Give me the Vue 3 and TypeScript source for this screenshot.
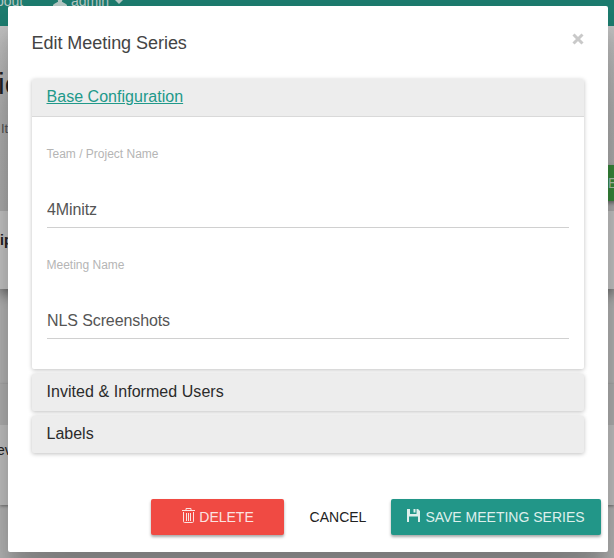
<script setup lang="ts">
import { ref } from 'vue'

const team = ref('4Minitz')
const meeting = ref('NLS Screenshots')
const collapsed = [
  { title: 'Invited & Informed Users', cls: 't-users' },
  { title: 'Labels', cls: 't-labels' },
]
</script>

<template>
  <div class="screen">
    <div class="page">
      <nav class="navbar">
        <span class="nav-about">bout</span>
        <svg class="nav-user" viewBox="0 0 14 14"><path d="M7 0c2.200 0 3.500 1.600 3.500 3.600 0 1.800-.8 3.200-1.500 4v1.200l4 2.200c.8.500 1 1 1 2H0c0-1 .2-1.500 1-2l4-2.200V7.600c-.7-.8-1.500-2.200-1.500-4C3.500 1.600 4.800 0 7 0z" /></svg>
        <span class="nav-name">admin</span>
        <svg class="caret" viewBox="0 0 8 4"><path d="M0 0h8L4 4z" /></svg>
      </nav>
      <section class="hero">
        <h1>ie</h1>
        <p>It</p>
        <span class="add">E</span>
      </section>
      <section class="list-card"><b>ip</b></section>
      <section class="table-card">
        <div class="table-head"></div>
        <div class="table-row">ev</div>
      </section>
    </div>

    <div class="modal">
      <header class="modal-header">
        <h4>Edit Meeting Series</h4>
        <button class="close" aria-label="Close">
          <svg viewBox="0 0 12 12"><path d="M1.500 1.500 10.500 10.500M10.500 1.500 1.500 10.500" /></svg>
        </button>
      </header>
      <div class="accordion">
        <section class="panel open">
          <div class="panel-heading"><a class="t-base">Base Configuration</a></div>
          <div class="panel-body">
            <label class="field-label">Team / Project Name</label>
            <input v-model="team" class="i-team" type="text" />
            <label class="field-label">Meeting Name</label>
            <input v-model="meeting" class="i-meet" type="text" />
          </div>
        </section>
        <section v-for="p in collapsed" :key="p.title" class="panel">
          <div class="panel-heading"><span :class="p.cls">{{ p.title }}</span></div>
        </section>
      </div>
      <footer class="modal-footer">
        <button class="btn danger">
          <svg class="trash" viewBox="0 0 13 15"><path d="M0 2.500h13M4 2.500V.5h5v2M1.500 4v9.300c0 .8.300 1.200 1 1.200h8c.7 0 1-.4 1-1.200V4M4.500 5v8M6.500 5v8M8.500 5v8" /></svg>
          <span>DELETE</span>
        </button>
        <button class="btn flat"><span>CANCEL</span></button>
        <button class="btn primary">
          <svg class="save" viewBox="0 0 13 13"><path d="M0 0h3v5h6.500V0H11l2 2v11h-2V7.500H2V13H0zM6.500 0h2v3.500h-2z" /></svg>
          <span>SAVE MEETING SERIES</span>
        </button>
      </footer>
    </div>
  </div>
</template>

<style>
body { margin: 0; overflow: hidden; }
</style>

<style scoped>
* { box-sizing: border-box; }
.screen { position: relative; width: 614px; height: 558px; overflow: hidden; background: #bdbdbd; font-family: "Liberation Sans", Arial, sans-serif; color: #222; }
h1, h4, p { margin: 0; font-weight: 400; }
.page { display: flex; flex-direction: column; height: 558px; }
.navbar { display: flex; align-items: flex-start; height: 26px; flex: none; background: #1d7d70; color: #b7c9c5; font-size: 14px; line-height: 16px; overflow: hidden; }
.nav-about { margin: -7px 0 0 -4px; width: 57px; }
.nav-user { width: 14px; height: 14px; margin-top: -7px; fill: currentColor; }
.nav-name { margin: -7px 0 0 4px; }
.caret { width: 8px; height: 4px; margin: 0 0 0 6px; fill: currentColor; }
.hero { position: relative; height: 185px; flex: none; background: linear-gradient(#c4c4c4, #b8b8b8 90px, #b5b5b5); }
.hero h1 { margin-left: -2px; padding-top: 41px; font-size: 30px; line-height: 34px; }
.hero p { padding: 20px 0 0 1px; font-size: 13px; line-height: 16px; color: #555; }
.add { position: absolute; left: 560px; top: 139px; width: 80px; height: 36px; padding-left: 48px; background: #3a8f3e; color: #b9d0b9; font-size: 14px; line-height: 36px; box-shadow: 0 2px 4px #0006; }
.list-card { height: 78px; flex: none; padding-top: 21px; background: #cfcfcf; box-shadow: 0 5px 12px #0007; font-size: 14px; line-height: 16px; }
.list-card b { display: block; }
.table-card { margin-top: 95px; height: 121px; flex: none; background: #cbcbcb; box-shadow: 0 1px 3px #0006; }
.table-head { height: 41px; background: #b9b9b9; }
.table-row { margin-left: -3px; padding-top: 17px; font-size: 14px; line-height: 16px; }

.modal { position: absolute; left: 8px; top: 6px; width: 600px; height: 546px; display: flex; flex-direction: column; padding: 0 24px; background: #fff; border-radius: 2px; box-shadow: 0 27px 24px rgba(0, 0, 0, .2), 0 40px 77px rgba(0, 0, 0, .22); }
.modal-header { display: flex; justify-content: space-between; height: 73px; padding-top: 24px; }
.modal-header h4 { margin-left: -.5px; font-size: 18px; line-height: 26px; color: #444; white-space: nowrap; letter-spacing: -.04px; }
button { font-family: inherit; border: 0; background: none; padding: 0; margin: 0; }
.close { width: 12px; height: 12px; margin: 3px .5px 0 0; }
.close svg { display: block; width: 12px; height: 12px; fill: none; stroke: #c9c9c9; stroke-width: 3; }
.accordion { display: flex; flex-direction: column; gap: 5px; }
.panel { width: 552px; background: #ededed; border-radius: 2px; box-shadow: 0 1px 4px rgba(0, 0, 0, .25); }
.open { height: 290px; background: #fff; }
.panel-heading { height: 37px; padding-left: 15px; font-size: 16px; line-height: 35px; white-space: nowrap; border-radius: 2px; color: #2b2b2b; }
.panel-heading > * { margin-left: -.5px; }
.t-users { letter-spacing: .05px; }
.open .panel-heading { height: 38px; background: #ededed; border-bottom: 1px solid #d9d9d9; border-radius: 2px 2px 0 0; }
.t-base { color: #21998a; text-decoration: underline; letter-spacing: .03px; }
.panel-body { display: flex; flex-direction: column; padding: 29px 15px 0; }
.field-label { height: 16px; margin-left: -.5px; font-size: 12px; line-height: 16px; color: #b5b5b5; }
input { width: 522px; height: 38px; margin: 28px 0 29px; padding: 2px 0 0; border: 0; border-bottom: 1px solid #d0d0d0; outline: 0; background: transparent; font: 16px/35px "Liberation Sans", Arial, sans-serif; color: #555; border-radius: 0; }
.i-team, .i-meet { letter-spacing: -.1px; }
.modal-footer { display: flex; margin: 46px -17px 0 119px; height: 36px; }
.btn { display: flex; align-items: center; justify-content: center; height: 36px; border-radius: 2px; font-size: 14px; line-height: 36px; white-space: nowrap; }
.danger { width: 133px; background: #f04a43; color: #fbe3e1; gap: 4px; padding-left: 1px; box-shadow: 0 2px 3px rgba(0, 0, 0, .35); }
.flat { width: 107px; padding-left: 1px; color: #222; }
.primary { width: 210px; background: #229688; color: #deefec; gap: 5px; box-shadow: 0 2px 3px rgba(0, 0, 0, .35); }
.trash { width: 13px; height: 15px; fill: none; stroke: currentColor; stroke-width: 1; margin-top: -3px; }
.save { width: 13px; height: 13px; fill: currentColor; fill-rule: evenodd; margin-top: -3px; }
</style>
